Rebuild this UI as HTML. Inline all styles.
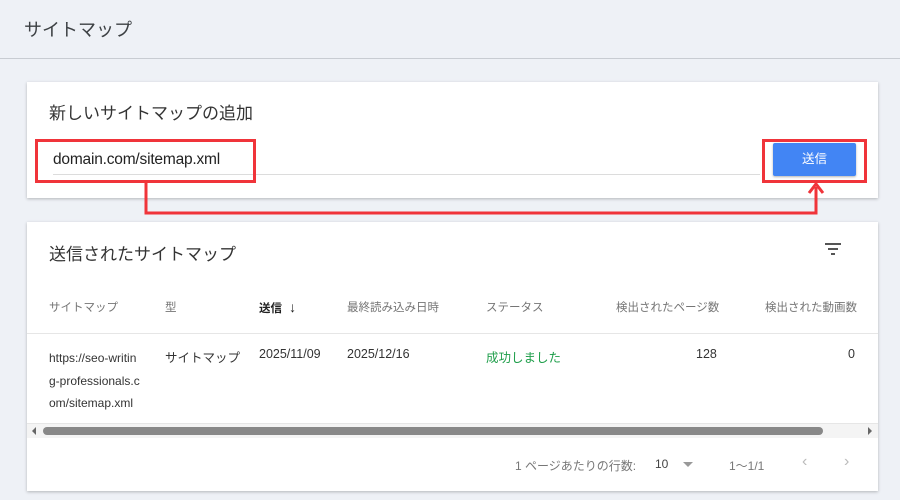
<!DOCTYPE html>
<html><head><meta charset="utf-8"><style>
*{margin:0;padding:0;box-sizing:border-box}
body{width:900px;height:500px;background:#eef1f6;font-family:"Liberation Sans","Noto Sans CJK JP",sans-serif;position:relative;overflow:hidden;color:#202124}
.a{position:absolute;white-space:nowrap}
.card{position:absolute;background:#fff;box-shadow:0 1px 3px rgba(0,0,0,.25)}
.th{font-size:11.5px;color:#757575}
.td{font-size:12.5px;color:#333}
.red{position:absolute;border:3px solid #f0343a}
</style></head><body>
<div class="a" style="left:24px;top:16px;font-size:18px;color:#3c4043">サイトマップ</div>
<div class="a" style="left:0;top:58px;width:900px;height:1px;background:#c8ccd2"></div>

<div class="card" style="left:27px;top:82px;width:851px;height:116px"></div>
<div class="a" style="left:49px;top:99px;font-size:17px;color:#333">新しいサイトマップの追加</div>
<div class="a" style="left:53px;top:174px;width:707px;height:1px;background:#dcdcdc"></div>
<div class="a" style="left:53px;top:151px;font-size:15.5px;color:#222;letter-spacing:-0.2px">domain.com/sitemap.xml</div>
<div class="a" style="left:773px;top:143px;width:83px;height:33px;background:#4285f4;border-radius:2px;box-shadow:0 1px 2px rgba(0,0,0,.3);color:#fff;font-size:12.5px;text-align:center;line-height:33px">送信</div>
<div class="red" style="left:35px;top:139px;width:221px;height:44px"></div>
<div class="red" style="left:762px;top:139px;width:105px;height:44px"></div>
<svg class="a" style="left:0;top:0" width="900" height="230"><path d="M146 183 V213 H816 V187" fill="none" stroke="#f0343a" stroke-width="3"/><path d="M809 193 L816 184 L823 193" fill="none" stroke="#f0343a" stroke-width="3"/></svg>

<div class="card" style="left:27px;top:222px;width:851px;height:269px"></div>
<div class="a" style="left:49px;top:240px;font-size:17px;color:#333">送信されたサイトマップ</div>
<svg class="a" style="left:824px;top:242px" width="18" height="14"><path d="M1 2H17M4 7H14M7 12H11" stroke="#555" stroke-width="2"/></svg>
<div class="a th" style="left:49px;top:299px">サイトマップ</div>
<div class="a th" style="left:165px;top:299px">型</div>
<div class="a th" style="left:259px;top:299px;color:#222;font-weight:bold">送信 <span style="font-weight:normal;font-size:14px">&nbsp;↓</span></div>
<div class="a th" style="left:347px;top:299px">最終読み込み日時</div>
<div class="a th" style="left:486px;top:299px">ステータス</div>
<div class="a th" style="left:616px;top:299px">検出されたページ数</div>
<div class="a th" style="left:765px;top:299px">検出された動画数</div>
<div class="a" style="left:27px;top:333px;width:851px;height:1px;background:#e6e6e6"></div>
<div class="a td" style="left:49px;top:347px;line-height:22.5px;font-size:12px">https://seo-writin<br>g-professionals.c<br>om/sitemap.xml</div>
<div class="a td" style="left:165px;top:347px">サイトマップ</div>
<div class="a td" style="left:259px;top:347px">2025/11/09</div>
<div class="a td" style="left:347px;top:347px">2025/12/16</div>
<div class="a td" style="left:486px;top:347px;color:#1e9e4a">成功しました</div>
<div class="a td" style="left:696px;top:347px">128</div>
<div class="a td" style="left:848px;top:347px">0</div>
<div class="a" style="left:27px;top:423px;width:851px;height:1px;background:#e6e6e6"></div>
<div class="a" style="left:27px;top:424px;width:851px;height:14px;background:#f4f4f4"></div>
<div class="a" style="left:43px;top:427px;width:780px;height:8px;background:#888;border-radius:4px"></div>
<div class="a" style="left:32px;top:427px;width:0;height:0;border:4px solid transparent;border-right:4px solid #666;border-left:0"></div>
<div class="a" style="left:868px;top:427px;width:0;height:0;border:4px solid transparent;border-left:4px solid #666;border-right:0"></div>
<div class="a" style="left:515px;top:457px;font-size:12px;color:#777">1 ページあたりの行数:</div>
<div class="a" style="left:655px;top:457px;font-size:12px;color:#444">10</div>
<div class="a" style="left:683px;top:462px;width:0;height:0;border:5px solid transparent;border-top:5px solid #999;border-bottom:0"></div>
<div class="a" style="left:729px;top:457px;font-size:12px;color:#777">1〜1/1</div>
<div class="a" style="left:802px;top:453px;font-size:16px;color:#bbb">‹</div>
<div class="a" style="left:844px;top:453px;font-size:16px;color:#bbb">›</div>
</body></html>
